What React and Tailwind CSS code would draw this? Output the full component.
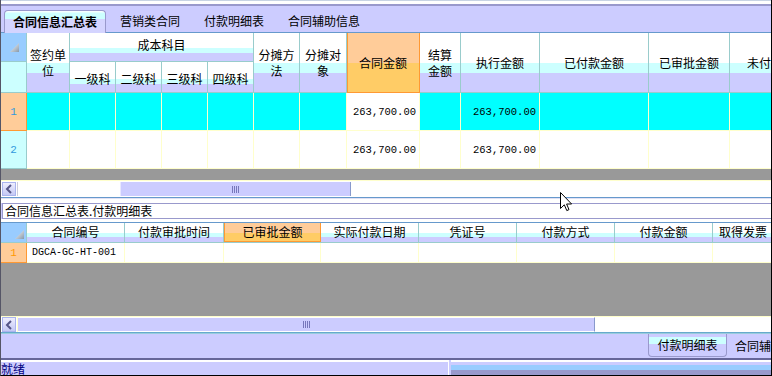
import React from 'react';

const cjk = "font-['Noto_Sans_CJK_SC',sans-serif]";
const mono = "font-['Liberation_Mono',monospace]";
const hdrTall = "bg-[linear-gradient(#ffffff_51%,#ccffff_51%,#ccffff_68%,#ccccff_68%)]";
const hdrShort = "bg-[linear-gradient(#ffffff_55%,#ccffff_55%,#ccffff_72%,#ccccff_72%)]";
const hdrLow = "bg-[linear-gradient(#ffffff_55%,#ccffff_55%,#ccffff_75%,#ccccff_75%)]";
const hdrOrange = "bg-[linear-gradient(#ffcc99_51%,#ffcc66_51%)]";

const topCols = "grid grid-cols-[26px_43px_46px_46px_46px_46px_46px_47px_73px_41px_79px_109px_81px_41px]";
const lowCols = "grid grid-cols-[26px_98px_99px_97px_98px_98px_98px_98px_58px]";

function CornerTriangle() {
  return (
    <svg width="9" height="9" viewBox="0 0 9 9">
      <defs>
        <linearGradient id="tri" x1="0" y1="0" x2="1" y2="1">
          <stop offset="0" stopColor="#ffffff" />
          <stop offset="1" stopColor="#8899aa" />
        </linearGradient>
      </defs>
      <polygon points="9,0 9,9 0,9" fill="url(#tri)" />
    </svg>
  );
}

function ArrowButton() {
  return (
    <div className="w-[14px] h-full flex-none flex items-center justify-center border border-[#aab4ee] bg-[linear-gradient(#eeeeff,#c4c8f4)] ml-px">
      <svg width="8" height="10" viewBox="0 0 8 10">
        <path d="M6 1 L2 5 L6 9" fill="none" stroke="#555588" strokeWidth="2" />
      </svg>
    </div>
  );
}

function Grip() {
  return (
    <div className="flex gap-px">
      <div className="w-px h-[7px] bg-[#7777bb]" />
      <div className="w-px h-[7px] bg-[#7777bb]" />
      <div className="w-px h-[7px] bg-[#7777bb]" />
      <div className="w-px h-[7px] bg-[#7777bb]" />
    </div>
  );
}

function TopHeader() {
  const tall = `${hdrTall} row-span-2 border-r border-b border-[#99cccc] flex items-center justify-center text-center leading-[16px]`;
  const sub = `${hdrShort} border-r border-b border-[#99cccc] flex items-center justify-center whitespace-nowrap overflow-hidden pt-[4px]`;
  return (
    <div className={`${topCols} grid-rows-[29px_31px] h-[60px]`}>
      <div className="row-span-2 flex flex-col border-r border-b border-[#99cccc]">
        <div className="h-[29px] bg-[#99ccff] border-b border-[#99cccc] flex items-center justify-center pl-[2px]">
          <CornerTriangle />
        </div>
        <div className="flex-1 bg-[#ccffff]" />
      </div>
      <div className={tall}>签约单<br />位</div>
      <div className={`${hdrShort} col-span-4 border-r border-b border-[#99cccc] flex items-center justify-center pb-[4px]`}>成本科目</div>
      <div className={tall}>分摊方<br />法</div>
      <div className={tall}>分摊对<br />象</div>
      <div className={`${hdrOrange} row-span-2 border-r border-b border-[#ff9933] shadow-[inset_1px_0_0_#ff9933] flex items-center justify-center`}>合同金额</div>
      <div className={tall}>结算<br />金额</div>
      <div className={tall}>执行金额</div>
      <div className={tall}>已付款金额</div>
      <div className={tall}>已审批金额</div>
      <div className={`${hdrTall} row-span-2 border-b border-[#99cccc] flex items-center whitespace-nowrap overflow-hidden pl-[17px]`}>未付款金额</div>
      <div className={sub}>一级科</div>
      <div className={sub}>二级科</div>
      <div className={sub}>三级科</div>
      <div className={sub}>四级科</div>
    </div>
  );
}

function TopRow({ n, active }) {
  const bg = active ? 'bg-[#00ffff]' : 'bg-white';
  const cell = `${bg} border-r border-[#ffffcc]`;
  const money = `${mono} text-[10.5px] flex items-center justify-end pr-[3px] border-r border-[#ffffcc]`;
  return (
    <div className={`${topCols} h-[38px] border-b border-[#ffffcc]`}>
      <div
        className={
          active
            ? `bg-[#ffcc99] border-r border-b border-[#ff9933] -mb-px flex items-center justify-center text-[#3399dd] ${mono} text-[11px]`
            : `bg-[#ccffff] border-r border-b border-[#99cccc] -mb-px flex items-center justify-center text-[#3399dd] ${mono} text-[11px]`
        }
      >
        {n}
      </div>
      <div className={cell} />
      <div className={cell} />
      <div className={cell} />
      <div className={cell} />
      <div className={cell} />
      <div className={cell} />
      <div className={cell} />
      <div className={`${money} bg-white`}>263,700.00</div>
      <div className={cell} />
      <div className={`${money} ${bg}`}>263,700.00</div>
      <div className={cell} />
      <div className={cell} />
      <div className={bg} />
    </div>
  );
}

function LowHeader() {
  const h = `${hdrLow} border-r border-[#99cccc] flex items-center justify-center whitespace-nowrap overflow-hidden pb-[2px]`;
  return (
    <div className={`${lowCols} h-[21px] border-t border-[#6699cc] border-b border-b-[#99cccc]`}>
      <div className="bg-[#99ccff] border-r border-[#99cccc] flex items-end justify-end pr-[2px] pb-[3px]">
        <CornerTriangle />
      </div>
      <div className={h}>合同编号</div>
      <div className={h}>付款审批时间</div>
      <div className={`${hdrOrange} border-x border-[#ff9933] shadow-[inset_0_-1px_0_#ff9933] flex items-center justify-center pb-[2px]`}>已审批金额</div>
      <div className={h}>实际付款日期</div>
      <div className={h}>凭证号</div>
      <div className={h}>付款方式</div>
      <div className={h}>付款金额</div>
      <div className={`${hdrLow} flex items-center whitespace-nowrap overflow-hidden pl-[6px] pb-[2px]`}>取得发票</div>
    </div>
  );
}

function LowRow() {
  const cell = 'bg-white border-r border-[#ffffcc]';
  return (
    <div className={`${lowCols} h-[20px] border-b border-[#ffffcc]`}>
      <div className={`bg-[#ffcc99] border-r border-b border-[#ff9933] -mb-px flex items-center justify-center text-[#ff9900] ${mono} text-[11px]`}>1</div>
      <div className={`${cell} ${mono} text-[10px] flex items-center pl-[5px] whitespace-nowrap`}>DGCA-GC-HT-001</div>
      <div className={cell} />
      <div className={cell} />
      <div className={cell} />
      <div className={cell} />
      <div className={cell} />
      <div className={cell} />
      <div className="bg-white" />
    </div>
  );
}

export default function App() {
  return (
    <div className={`relative w-[772px] h-[376px] overflow-hidden bg-[#ccccff] border-l border-[#555566] border-r border-r-black border-b border-b-black flex flex-col text-[12px] text-black ${cjk}`}>
      {/* top strip */}
      <div className="h-[4px] flex-none bg-white border-t border-[#c8d4e4]" />
      <div className="h-[2px] flex-none bg-[#9999cc]" />

      {/* top tabs */}
      <div className="h-[27px] flex-none flex items-end border-b border-[#6699cc] pl-[3px] whitespace-nowrap">
        <div className="h-[23px] px-[8px] flex items-center font-bold border-x border-t border-[#9999cc] rounded-t-[4px] bg-[linear-gradient(#ffffff_0,#ccffff_12%,#ccffff_38%,#d4d4ff_38%)] -mb-px">
          合同信息汇总表
        </div>
        <div className="h-[23px] ml-[2px] px-[12px] flex items-center">营销类合同</div>
        <div className="h-[23px] px-[12px] flex items-center">付款明细表</div>
        <div className="h-[23px] px-[12px] flex items-center">合同辅助信息</div>
      </div>

      {/* upper grid */}
      <div className="flex-none leading-[16px]">
        <TopHeader />
        <TopRow n={1} active />
        <TopRow n={2} />
      </div>
      <div className="h-[11px] flex-none bg-[#999999]" />
      <div className="h-[18px] flex-none flex bg-white border-t border-[#ffffcc] border-b border-b-[#6699cc] py-px">
        <ArrowButton />
        <div className="w-[2px] flex-none border-r border-[#ccccdd]" />
        <div className="w-[102px] flex-none bg-white" />
        <div className="w-[231px] flex-none bg-[#ccccff] border-l border-[#e8e8ff] border-r border-r-[#8899cc] flex items-center justify-center">
          <Grip />
        </div>
        <div className="flex-1 bg-white" />
      </div>

      {/* splitter + caption */}
      <div className="h-[5px] flex-none bg-white border-t border-[#e0e0f4]" />
      <div className="h-[16px] flex-none bg-white border-y border-l border-[#9999cc] ml-px flex items-center pl-[2px] leading-[14px] whitespace-nowrap">
        合同信息汇总表.付款明细表
      </div>
      <div className="h-[3px] flex-none bg-white" />

      {/* lower grid */}
      <div className="flex-none leading-[14px]">
        <LowHeader />
        <LowRow />
      </div>
      <div className="h-[53px] flex-none bg-[#999999]" />
      <div className="h-[16px] flex-none flex bg-white border-t border-[#ffffcc]">
        <ArrowButton />
        <div className="w-[2px] flex-none border-r border-[#ffffcc]" />
        <div className="w-[577px] flex-none bg-[#ccccff] border-y border-white border-r border-r-[#8899cc] flex items-center justify-center">
          <Grip />
        </div>
        <div className="flex-1 bg-white" />
      </div>
      <div className="h-[2px] flex-none bg-[#66aacc] border-b border-[#99ccdd]" />

      {/* bottom tabs */}
      <div className="h-[24px] flex-none flex items-start pl-[647px] whitespace-nowrap overflow-hidden">
        <div className="h-[23px] w-[79px] flex-none flex items-center justify-center border-x border-b border-[#9999cc] rounded-b-[4px] bg-[linear-gradient(#ccccff_0,#ccccff_15%,#ccffff_15%,#ccffff_45%,#ccccff_45%)]">
          付款明细表
        </div>
        <div className="h-[23px] pl-[8px] flex items-center">合同辅助信息</div>
      </div>
      <div className="h-[2px] flex-none bg-[#666699]" />

      {/* status bar */}
      <div className="flex-1 flex">
        <div className="w-[448px] flex-none border-t-2 border-white border-r border-r-white flex items-end leading-[13px] text-[#000080]">
          就绪
        </div>
        <div className="flex-1 ml-[2px] flex flex-col border-t-2 border-white">
          <div className="h-[3px] bg-[#ccccff]" />
          <div className="h-[5px] bg-[#99ccff]" />
          <div className="flex-1 bg-[#9999cc]" />
        </div>
      </div>

      {/* mouse pointer */}
      <svg className="absolute left-[559px] top-[192px]" width="13" height="20" viewBox="0 0 13 20">
        <path d="M0.5 0.5 L0.5 16.5 L4.3 12.8 L6.8 18.6 L9 17.6 L6.6 12 L11.6 12 Z" fill="#ffffff" stroke="#000000" strokeWidth="1" />
      </svg>
    </div>
  );
}
